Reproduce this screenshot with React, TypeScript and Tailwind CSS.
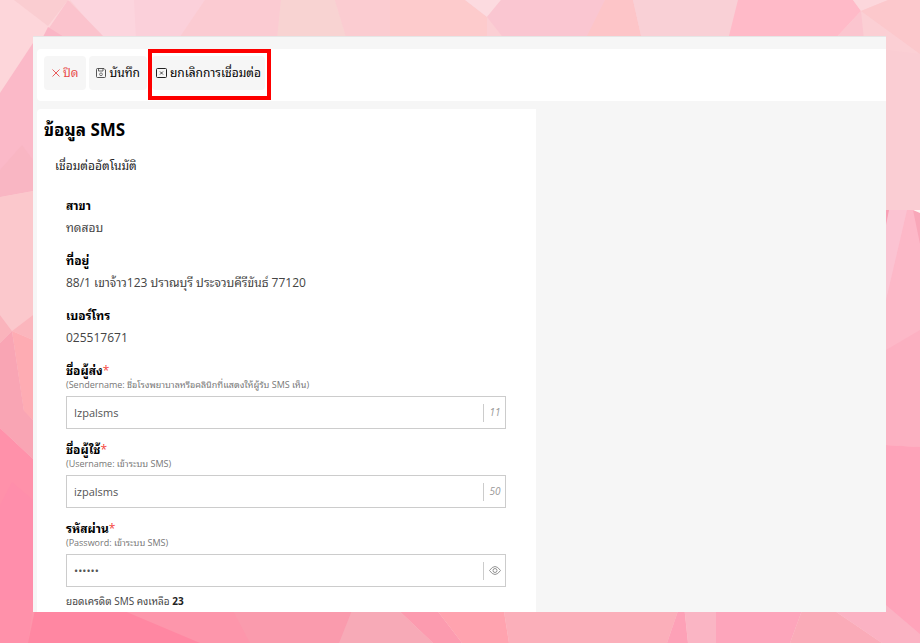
import React, { useState } from 'react';

interface InfoRowProps {
  label: string;
  value: string;
}

function InfoRow({ label, value }: InfoRowProps) {
  return (
    <div>
      <dt className="text-[12px] leading-4 font-bold text-black">{label}</dt>
      <dd className="mt-1 text-[12px] leading-5 text-[#444]">{value}</dd>
    </div>
  );
}

interface FieldProps {
  id: string;
  label: string;
  hint: string;
  children: React.ReactNode;
  suffix: React.ReactNode;
}

function Field({ id, label, hint, children, suffix }: FieldProps) {
  return (
    <div>
      <label htmlFor={id} className="block text-[12px] leading-4 font-bold text-black">
        {label}
        <span className="font-normal text-[#f4433c]">*</span>
      </label>
      <p className="text-[9px] leading-3 text-[#777]">{hint}</p>
      <div className="mt-[5px] flex h-[33px] items-center border border-[#ccc]">
        {children}
        <div className="flex h-[18px] w-[22px] items-center justify-center border-l border-[#ccc] text-[10px] italic text-[#999]">
          {suffix}
        </div>
      </div>
    </div>
  );
}

const inputClass = 'h-full min-w-0 flex-1 bg-transparent px-[7px] text-[11px] text-[#555] outline-none';
const buttonClass = 'flex h-[34px] items-center rounded-sm bg-[#f6f6f6] text-[12px]';

function Backdrop() {
  return (
    <svg
      className="absolute inset-0 h-full w-full"
      viewBox="0 0 920 643"
      preserveAspectRatio="none"
      aria-hidden="true"
    >
      <rect width="920" height="643" fill="#fbcfd4" />
      {/* top edge */}
      <path d="M0 0H70L44 38L33 46L0 93Z" fill="#fdd6da" />
      <path d="M14 0H68L48 26Z" fill="#facdd1" />
      <path d="M70 0H137V40H104Z" fill="#fcd5de" />
      <path d="M68 0L104 37H43Z" fill="#fbc3cd" />
      <path d="M48 27L64 37H43Z" fill="#fab6c6" />
      <path d="M134 0H205L178 40H136Z" fill="#fbd0da" />
      <path d="M205 0H281L277 40H178Z" fill="#fbcbd2" />
      <path d="M281 0H335L347 40H277Z" fill="#f8d3d2" />
      <path d="M335 0H400V40H347Z" fill="#fbccd1" />
      <path d="M390 0H465L487 17V40H390Z" fill="#fdcbcc" />
      <path d="M465 0H501L487 17Z" fill="#fcdbe0" />
      <path d="M501 0H605L595 40H505L487 17Z" fill="#fac6d1" />
      <path d="M605 0H633L642 40H585Z" fill="#fdc5c8" />
      <path d="M633 0H738L728 40H642Z" fill="#f9d0d6" />
      <path d="M738 0H853L861 11L834 40H728Z" fill="#ffbac8" />
      <path d="M853 0H888L861 11Z" fill="#fcd7dc" />
      <path d="M861 11L888 0H920V54Z" fill="#fcc8cc" />
      <path d="M861 11L834 40H864Z" fill="#fbc5cf" />
      {/* left edge */}
      <path d="M0 93L33 43V191L0 197Z" fill="#fbb9c8" />
      <path d="M0 170L22 145L33 160V191L0 197Z" fill="#f9b6c3" />
      <path d="M0 197L33 191V315L12 331L0 315Z" fill="#fbc8cc" />
      <path d="M0 315L12 331L0 343Z" fill="#fab4bc" />
      <path d="M12 331L33 315V340Z" fill="#fbb6bd" />
      <path d="M12 331L33 340V420L24 412Z" fill="#feacb3" />
      <path d="M0 343L12 331L24 411L33 420V459L0 428Z" fill="#f9a5b4" />
      <path d="M0 428L33 459V643H0Z" fill="#ff91aa" />
      <path d="M0 505L12 482L33 500V600L0 600Z" fill="#ff8eab" />
      {/* right edge */}
      <path d="M886 50L920 54V210H886Z" fill="#facdd3" />
      <path d="M886 210H920V447L886 445Z" fill="#fdb8c8" />
      <path d="M886 210H907L886 300Z" fill="#fbc3d2" />
      <path d="M886 210H889L886 225Z" fill="#f99fb5" />
      <path d="M913 210L920 211V244Z" fill="#f9a7b9" />
      <path d="M913 210H920V213Z" fill="#fff5f2" />
      <path d="M886 350L920 330V447L886 445Z" fill="#fdb0c2" />
      <path d="M886 445L920 447V643H886Z" fill="#ffa3ba" />
      {/* bottom edge */}
      <path d="M33 605H360V643H28Z" fill="#fd96ab" />
      <path d="M36 605H110L200 643H28Z" fill="#ff87a2" />
      <path d="M230 605H354L339 643H250Z" fill="#fa9bad" />
      <path d="M354 605H393L433 643H339Z" fill="#f7aab7" />
      <path d="M393 605H433L462 643H433Z" fill="#fc9baf" />
      <path d="M433 605H503L509 643H462Z" fill="#ffa3af" />
      <path d="M503 605H680L667 643H509Z" fill="#fbafba" />
      <path d="M680 605H684L688 643H667Z" fill="#fda1b7" />
      <path d="M684 605H716V643H688Z" fill="#fab5c4" />
      <path d="M716 605H804L790 643H716Z" fill="#fda5bb" />
      <path d="M804 605H826L882 643H790Z" fill="#faabb8" />
      <path d="M826 605H886L920 634V643H882Z" fill="#fbb2c3" />
    </svg>
  );
}

function App() {
  const [sender, setSender] = useState('Izpalsms');
  const [username, setUsername] = useState('izpalsms');
  const [password, setPassword] = useState('123456');
  const [showPassword, setShowPassword] = useState(false);

  return (
    <div className="relative flex min-h-screen flex-col pt-9 pr-[34px] pb-[31px] pl-[33px] font-['Open_Sans','Noto_Sans_Thai_Looped','Loma','Noto_Sans_Thai',sans-serif]">
      <Backdrop />
      <main className="relative flex flex-1 flex-col border-t border-[#e6e6e6] bg-[#f6f6f6] pt-3 pl-1">
        <div className="flex h-[52px] items-start gap-[3px] rounded-l bg-white px-[7px] pt-[7px]">
          <button type="button" className={`${buttonClass} gap-[3px] px-2 text-[#e84a4a]`}>
            <svg className="h-2 w-2" viewBox="0 0 8 8" fill="none" stroke="currentColor">
              <path d="M.5 .5L7.500 7.500M7.500 .5L.5 7.500" strokeWidth=".9" />
            </svg>
            ปิด
          </button>
          <button type="button" className={`${buttonClass} gap-[3px] px-[7px] text-black`}>
            <svg className="h-[10px] w-[10px]" viewBox="0 0 10 10" fill="none" stroke="#444">
              <path d="M.5 1.5Q.5 .5 1.5 .5H8L9.500 2V8.500Q9.500 9.500 8.500 9.500H1.500Q.5 9.500 .5 8.500Z" strokeWidth=".9" />
              <path d="M2.500 .5V3H7V.5" strokeWidth=".8" />
              <circle cx="5" cy="6.300" r="1.400" strokeWidth=".7" />
            </svg>
            บันทึก
          </button>
          <button type="button" className={`${buttonClass} relative ml-[2px] gap-[3px] px-1 text-black`}>
            <svg className="h-[10px] w-[11px]" viewBox="0 0 11 10" fill="none" stroke="#222">
              <rect x=".5" y=".5" width="10" height="9" rx="1" />
              <path d="M4 3.500L7 6.500M7 3.500L4 6.500" strokeWidth=".8" />
            </svg>
            ยกเลิกการเชื่อมต่อ
            <span className="pointer-events-none absolute -top-[7px] -right-[6px] -bottom-[10px] -left-[4px] border-4 border-[#fe0000]" />
          </button>
        </div>

        <div className="mt-2 grid flex-1 grid-cols-[10fr_7fr]">
          <section className="rounded-tl bg-white pt-[9px] pr-[30px] pl-[7px]">
            <h1 className="text-[17px] leading-6 font-bold text-black">ข้อมูล SMS</h1>
            <p className="mt-4 pl-[11px] text-[12px] leading-4 text-[#222]">เชื่อมต่ออัตโนมัติ</p>

            <div className="pl-[22px]">
              <dl className="mt-6 flex flex-col gap-[15px]">
                <InfoRow label="สาขา" value="ทดสอบ" />
                <InfoRow label="ที่อยู่" value="88/1 เขาจ้าว123 ปราณบุรี ประจวบคีรีขันธ์ 77120" />
                <InfoRow label="เบอร์โทร" value="025517671" />
              </dl>

              <form className="mt-[15px] flex flex-col gap-[13px]">
                <Field
                  id="sender"
                  label="ชื่อผู้ส่ง"
                  hint="(Sendername: ชื่อโรงพยาบาลหรือคลินิกที่แสดงให้ผู้รับ SMS เห็น)"
                  suffix="11"
                >
                  <input
                    id="sender"
                    type="text"
                    maxLength={11}
                    value={sender}
                    onChange={(e) => setSender(e.target.value)}
                    className={inputClass}
                  />
                </Field>
                <Field id="username" label="ชื่อผู้ใช้" hint="(Username: เข้าระบบ SMS)" suffix="50">
                  <input
                    id="username"
                    type="text"
                    maxLength={50}
                    value={username}
                    onChange={(e) => setUsername(e.target.value)}
                    className={inputClass}
                  />
                </Field>
                <Field
                  id="password"
                  label="รหัสผ่าน"
                  hint="(Password: เข้าระบบ SMS)"
                  suffix={
                    <button type="button" aria-label="แสดงรหัสผ่าน" onClick={() => setShowPassword(!showPassword)}>
                      <svg className="h-[9px] w-3" viewBox="0 0 12 9" fill="none" stroke="#888">
                        <path d="M.5 4.500Q6 -3.500 11.500 4.500Q6 12.500 .5 4.500Z" strokeWidth=".9" />
                        <circle cx="6" cy="4.500" r="2" strokeWidth=".9" />
                      </svg>
                    </button>
                  }
                >
                  <input
                    id="password"
                    type={showPassword ? 'text' : 'password'}
                    value={password}
                    onChange={(e) => setPassword(e.target.value)}
                    className={`${inputClass} text-[#222]`}
                  />
                </Field>
              </form>

              <p className="mt-[6px] text-[10px] leading-4 text-[#444]">
                ยอดเครดิต SMS คงเหลือ <strong className="font-bold text-[#222]">23</strong>
              </p>
            </div>
          </section>
        </div>
      </main>
    </div>
  );
}

export default App;
